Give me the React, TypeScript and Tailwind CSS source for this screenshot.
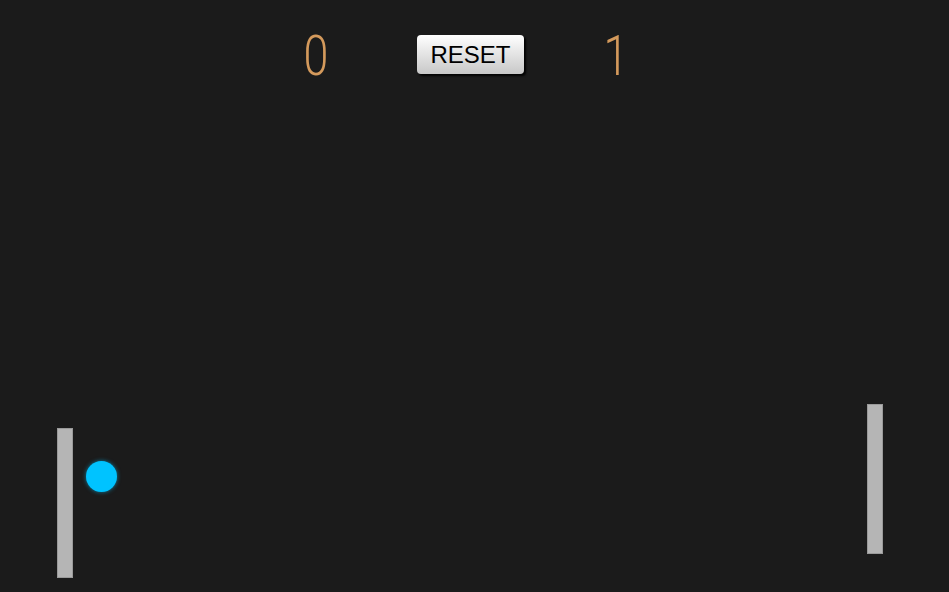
import React from 'react';

const App: React.FC = () => {
  return (
    <div className="relative w-[949px] h-[592px] overflow-hidden bg-[#1b1b1b]">
      <div className="flex items-start pl-[285px] pt-[28px]">
        <div className="w-[62px] text-center text-[#d49a5c] text-[56px] leading-[56px] font-light scale-x-[0.8]" style={{ fontFamily: 'Roboto, sans-serif' }}>
          0
        </div>
        <button className="ml-[70px] mt-[7px] w-[107px] h-[39px] rounded-[4px] bg-gradient-to-b from-white to-[#c8c8c8] text-black text-[24px] leading-none shadow-[2px_2px_2px_rgba(0,0,0,0.9)]" style={{ fontFamily: '"Liberation Sans", Arial, sans-serif' }}>
          RESET
        </button>
        <div className="ml-[61px] w-[62px] text-center text-[#d49a5c] text-[56px] leading-[56px] font-light scale-x-[0.8]" style={{ fontFamily: 'Roboto, sans-serif' }}>
          1
        </div>
      </div>

      {/* game objects */}
      <div className="absolute left-[57px] top-[428px] w-[16px] h-[150px] bg-[#b5b5b5] border border-[#9a9a9a]" />
      <div className="absolute left-[86px] top-[461px] w-[31px] h-[31px] rounded-full bg-[#00c3ff] shadow-[0_0_4px_rgba(0,195,255,0.6)]" />
      <div className="absolute left-[867px] top-[404px] w-[16px] h-[150px] bg-[#b5b5b5] border border-[#9a9a9a]" />
    </div>
  );
};

export default App;
